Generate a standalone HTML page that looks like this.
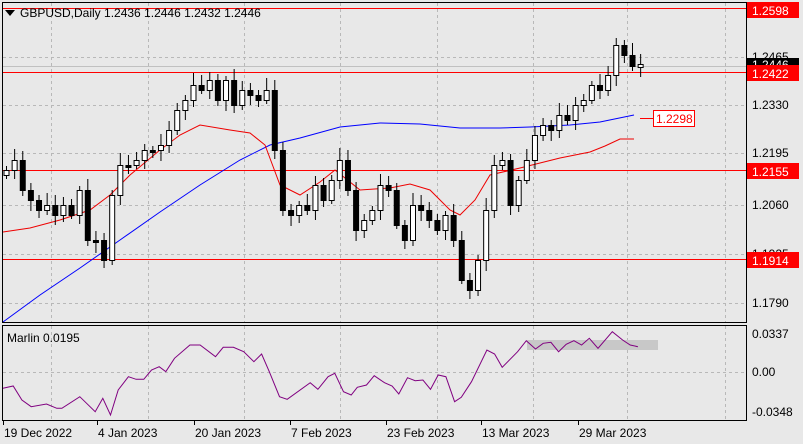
<!DOCTYPE html>
<html><head><meta charset="utf-8"><style>
body{margin:0;background:#e8e8e8;width:803px;height:444px;overflow:hidden;font-family:"Liberation Sans",sans-serif}
svg{display:block}
svg text{font-family:"Liberation Sans",sans-serif;font-size:12px}
</style></head><body>
<svg id="s" width="803" height="444" xmlns="http://www.w3.org/2000/svg">
<rect width="803" height="444" fill="#e8e8e8"/>
<g id="grid" stroke="#b8b8b8" stroke-dasharray="3,3" stroke-width="1"></g>
<line x1="3" y1="8.5" x2="746" y2="8.5" stroke="#f00"/>
<line x1="3" y1="72.5" x2="746" y2="72.5" stroke="#f00"/>
<line x1="3" y1="170.5" x2="746" y2="170.5" stroke="#f00"/>
<line x1="3" y1="259.5" x2="746" y2="259.5" stroke="#f00"/>
<line x1="3" y1="66.5" x2="746" y2="66.5" stroke="#c0c0c0"/>
<polyline fill="none" stroke="#00f" stroke-width="1" points="3,322 40,295 80,268 120,240 160,212 200,185 240,160 270,145 300,138 340,127 380,123 420,124 460,128 500,128 530,127 570,125 600,122 634,115"/>
<polyline fill="none" stroke="#e00" stroke-width="1" points="3,232 30,228 60,220 90,210 110,195 130,175 160,150 180,135 200,125 230,130 250,133 265,145 280,185 300,195 320,182 335,170 360,190 390,188 410,184 430,190 450,210 460,215 475,200 490,175 520,168 540,163 560,158 590,152 605,146 620,139 634,139"/>
<g id="c"></g>
<line x1="640" y1="118.5" x2="653" y2="118.5" stroke="#f00"/>
<rect x="653.5" y="110.5" width="41" height="16" fill="#fff" stroke="#f00"/>
<text x="656" y="123" fill="#f00">1.2298</text>
<rect x="2.5" y="2.5" width="744" height="320" fill="none" stroke="#000"/>
<rect x="2.5" y="325.5" width="744" height="95" fill="none" stroke="#000"/>
<polygon points="5,10 15,10 10,16" fill="#000"/>
<text x="20" y="17" fill="#000">GBPUSD,Daily  1.2436 1.2446 1.2432 1.2446</text>
<text x="7" y="342" fill="#000">Marlin 0.0195</text>
<rect x="527" y="340" width="131" height="10" fill="#c8c8c8"/>
<polyline id="m" fill="none" stroke="#800080" stroke-width="1"/>
<g id="ax" font-size="12"></g>
<rect x="747" y="2" width="52" height="16" fill="#f00"/><text x="752" y="15" fill="#fff">1.2598</text>
<text x="752" y="61" fill="#000">1.2465</text>
<rect x="747" y="58" width="52" height="12" fill="#000"/><text x="752" y="69" fill="#fff">1.2446</text>
<rect x="747" y="65" width="52" height="16" fill="#f00"/><text x="752" y="78" fill="#fff">1.2422</text>
<text x="752" y="109" fill="#000">1.2330</text>
<text x="752" y="157" fill="#000">1.2195</text>
<rect x="747" y="163" width="52" height="16" fill="#f00"/><text x="752" y="176" fill="#fff">1.2155</text>
<text x="752" y="209" fill="#000">1.2060</text>
<text x="752" y="258" fill="#000">1.1925</text>
<rect x="747" y="252" width="52" height="16" fill="#f00"/><text x="752" y="265" fill="#fff">1.1914</text>
<text x="752" y="307" fill="#000">1.1790</text>
<text x="752" y="338" fill="#000">0.0337</text>
<text x="752" y="376" fill="#000">0.00</text>
<text x="752" y="416" fill="#000">-0.0348</text>
</svg>
<script>
var NS="http://www.w3.org/2000/svg";
function el(t,a,p){var e=document.createElementNS(NS,t);for(var k in a)e.setAttribute(k,a[k]);document.getElementById(p).appendChild(e);return e;}
[51,148,244,340,437,533,627,725].forEach(function(x){el('line',{x1:x+.5,y1:3,x2:x+.5,y2:322},'grid');el('line',{x1:x+.5,y1:326,x2:x+.5,y2:420},'grid');});
[57,105,153,205,254,303].forEach(function(y){el('line',{x1:3,y1:y+.5,x2:746,y2:y+.5},'grid');});
el('line',{x1:3,y1:372.5,x2:746,y2:372.5},'grid');
var cl=[170,160,190,200,210,205,215,205,215,190,240,240,260,195,165,165,160,150,150,145,130,110,100,85,90,80,100,80,105,90,95,100,90,150,210,215,205,210,185,200,180,160,190,230,220,210,185,190,225,240,205,210,220,230,215,240,280,290,260,210,165,160,205,180,160,135,125,130,115,120,105,100,85,90,75,45,55,66,66];
var prev=175;
for(var i=0;i<cl.length;i++){var x=6+i*8.13,o=prev,c=cl[i];if(i==cl.length-1){o=67;c=64;}
var t=Math.min(o,c),b=Math.max(o,c);if(b-t<2)b=t+2;
var hi=t-4-(i*7%9),lo=b+4+(i*5%8);
el('line',{x1:x+.5,y1:hi,x2:x+.5,y2:lo,stroke:'#000'},'c');
el('rect',{x:x-2,y:t+.5,width:5,height:b-t,fill:c<o?'#fff':'#000',stroke:'#000'},'c');prev=c;}
var z=[[0,235],[20,228],[37,270],[55,290],[85,282],[105,295],[115,295],[150,260],[180,305],[195,265],[210,315],[225,240],[245,200],[260,208],[275,208],[290,180],[305,170],[318,185],[335,145],[365,105],[385,105],[415,140],[430,112],[450,112],[470,125],[490,155],[505,132],[520,185],[540,260],[555,268],[600,218],[615,238],[635,200],[648,190],[665,245],[680,255],[692,232],[710,225],[725,197],[745,218],[760,228],[773,252],[790,203],[805,212],[820,210],[835,238],[850,195],[865,200],[882,275],[895,262],[915,215],[945,120],[960,132],[975,172],[1005,125],[1022,92],[1040,117],[1055,100],[1070,97],[1085,125],[1100,103],[1115,92],[1130,105],[1145,85],[1162,115],[1190,65],[1210,90],[1225,105],[1240,110]];
document.getElementById('m').setAttribute('points',z.map(function(p){return (p[0]/1.953+3).toFixed(1)+','+(p[1]/3+310).toFixed(1)}).join(' '));
[[3,"19 Dec 2022"],[97,"4 Jan 2023"],[194,"20 Jan 2023"],[290,"7 Feb 2023"],[386,"23 Feb 2023"],[481,"13 Mar 2023"],[578,"29 Mar 2023"]].forEach(function(d){
el('line',{x1:d[0]+.5,y1:421,x2:d[0]+.5,y2:425,stroke:'#000'},'ax');
var t=el('text',{x:d[0]+1,y:437,fill:'#000'},'ax');t.textContent=d[1];});
</script>
</body></html>
